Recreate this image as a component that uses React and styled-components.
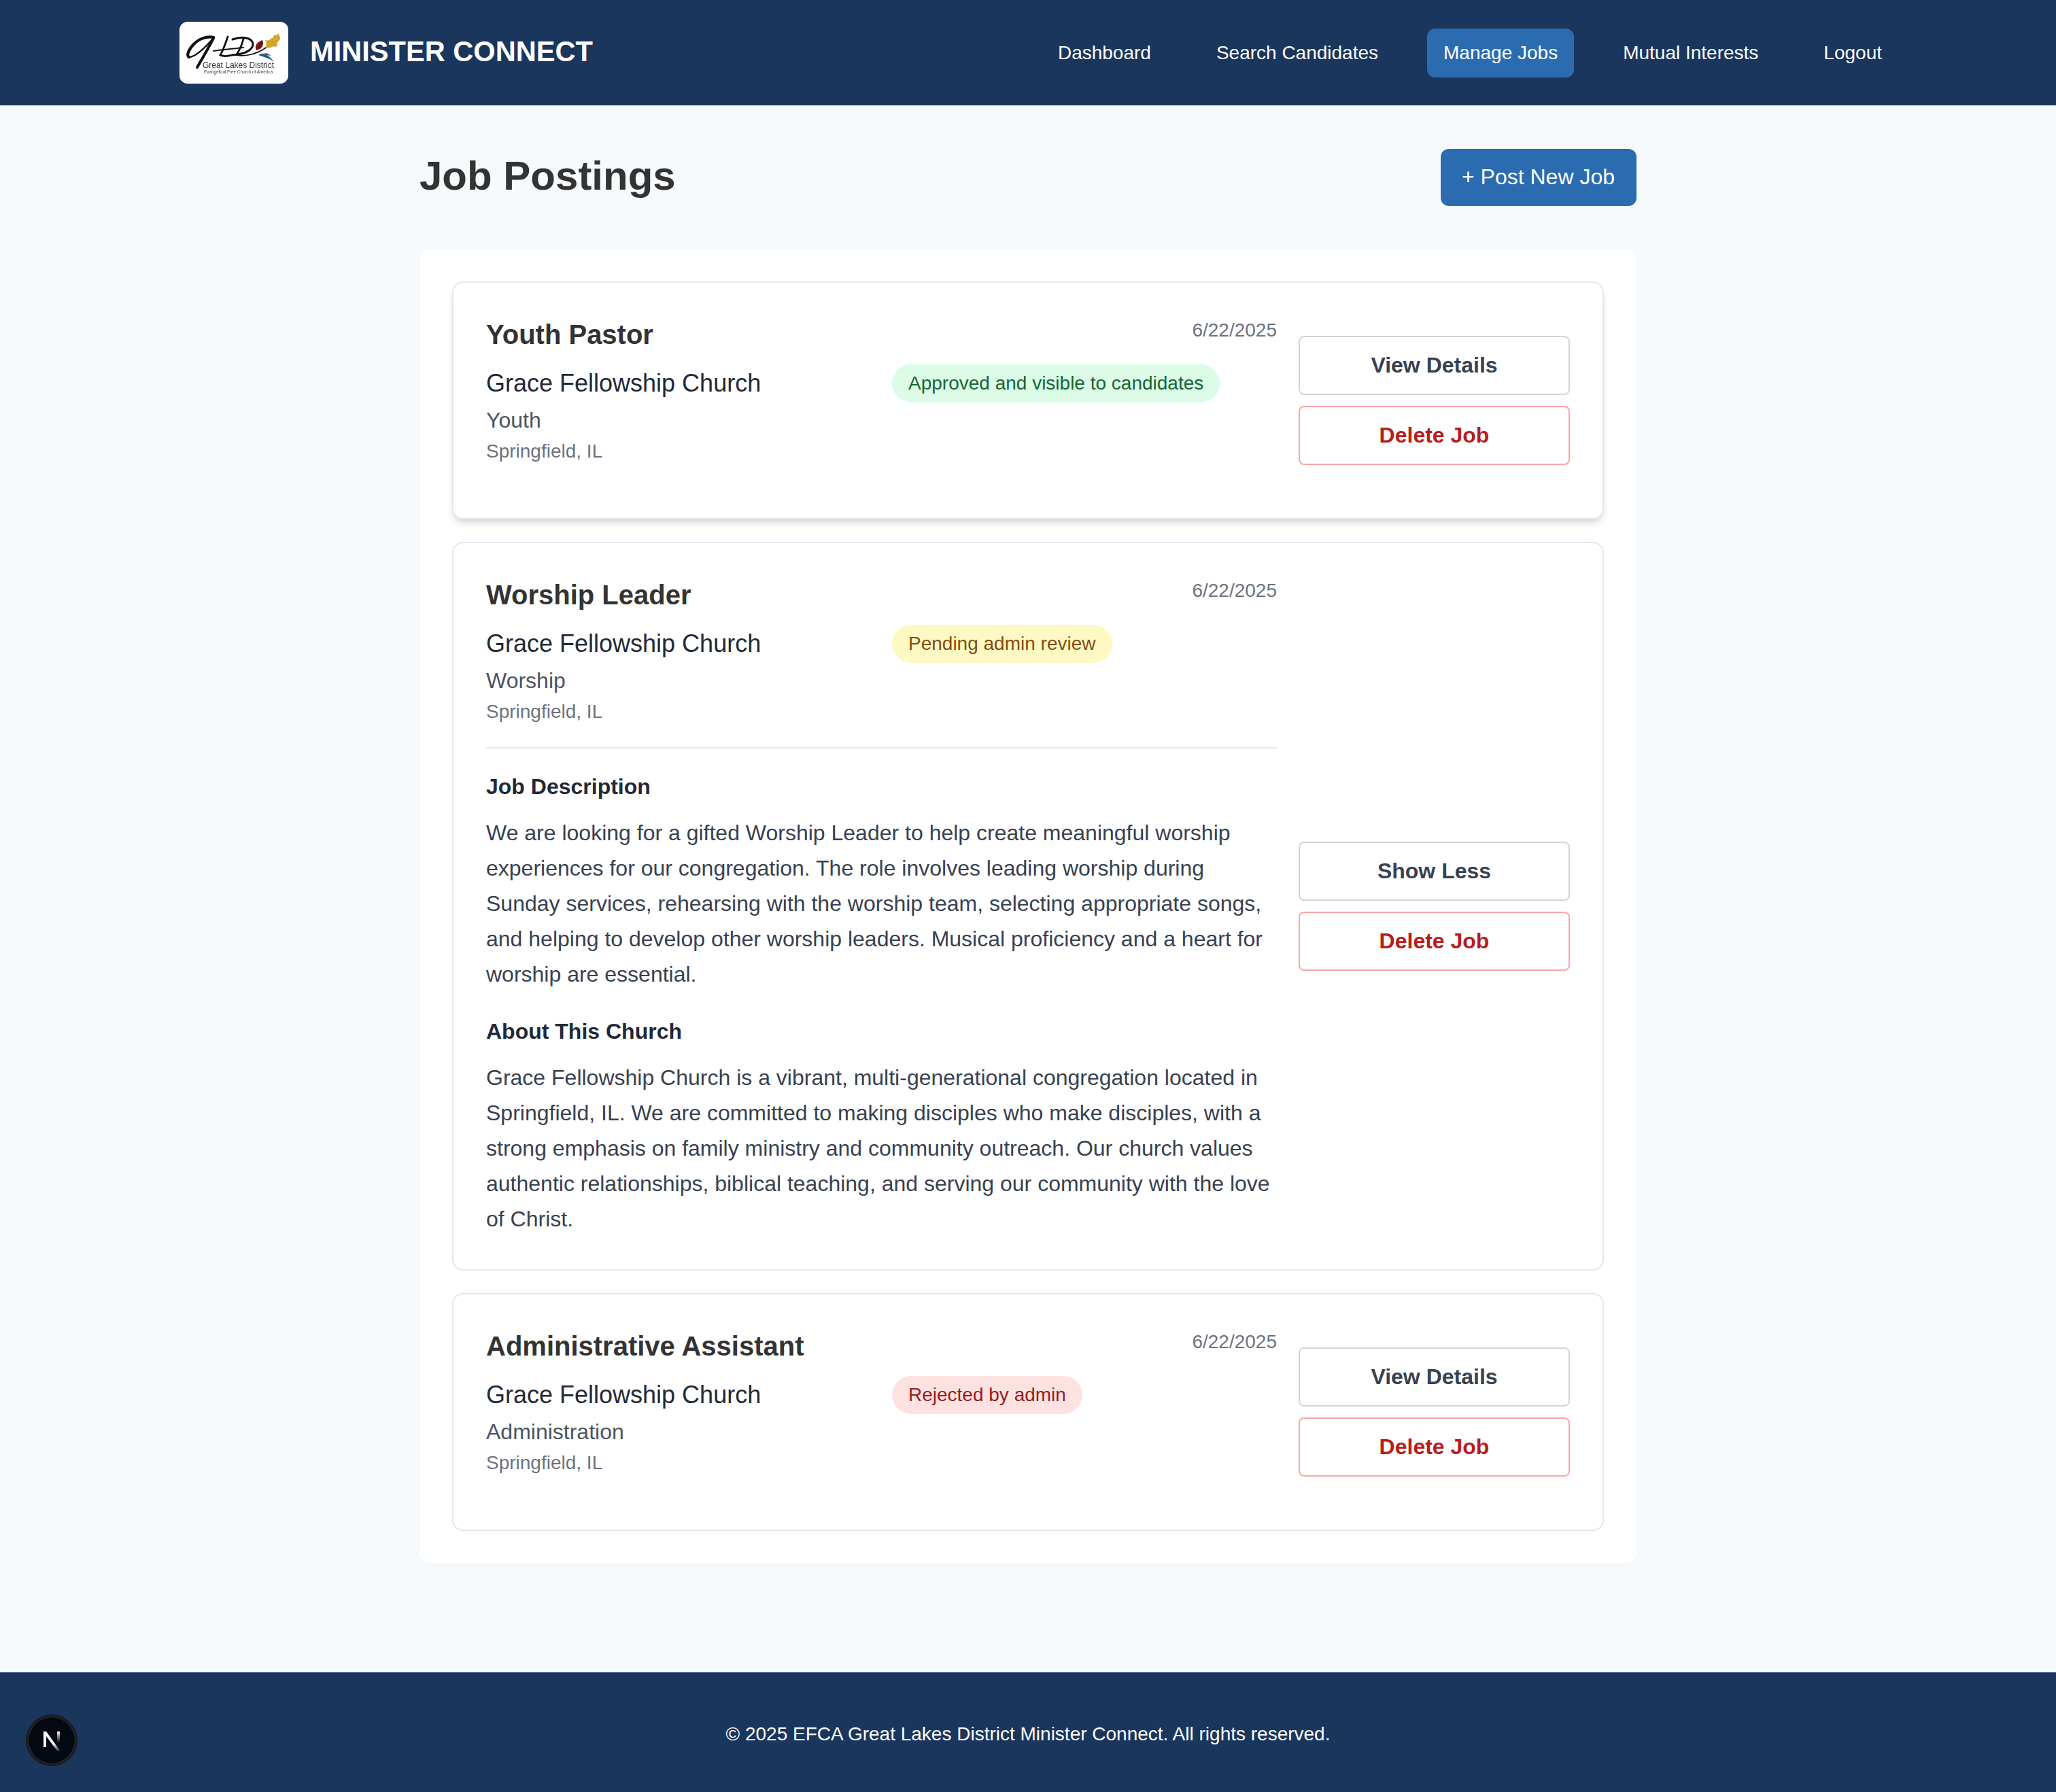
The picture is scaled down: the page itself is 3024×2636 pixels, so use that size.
import React from "react";
import styled, { createGlobalStyle } from "styled-components";

const GlobalStyle = createGlobalStyle`
* { box-sizing: border-box; }
body {
    margin: 0;
    background-color: #f7fafc;
    font-family: "Liberation Sans", Arial, sans-serif;
    color: #333;
    line-height: 1.6;
}
`;

const Page = styled.div`
min-height: 2636px;
display: flex;
flex-direction: column;
`;

const Header = styled.header`
height: 155px;
background-color: #1a365d;
display: flex;
align-items: center;
justify-content: space-between;
padding: 0 232px 0 264px;
`;

const Brand = styled.div`
display: flex;
align-items: center;
gap: 32px;
`;

const LogoBox = styled.div`
width: 160px;
height: 91px;
background-color: #fff;
border-radius: 12px;
overflow: hidden;
`;

const LogoSvg = styled.svg`
display: block;
filter: blur(0.4px);
`;

const BrandName = styled.span`
color: #fff;
font-size: 41.6px;
font-weight: 700;
margin-top: -2px;
`;

const Nav = styled.nav`
display: flex;
gap: 48px;
`;

const NavLink = styled.a`
color: #fff;
font-size: 28px;
line-height: 44px;
padding: 14px 24px;
border-radius: 12px;
background-color: ${(p) => (p.$active ? "#2b6cb0" : "transparent")};
`;

const Main = styled.main`
flex: 1;
width: 1790px;
margin: 0 auto;
padding-top: 56px;
`;

const TitleRow = styled.div`
display: flex;
align-items: center;
justify-content: space-between;
margin-bottom: 59px;
`;

const PageTitle = styled.h1`
margin: 0;
font-size: 60px;
font-weight: 700;
color: #333;
`;

const PostButton = styled.button`
border: 0;
border-radius: 12px;
margin-top: 4px;
padding: 16px 32px 16px 31px;
background-color: #2b6cb0;
color: #fff;
font-family: inherit;
font-size: 32px;
line-height: 1.6;
`;

const Panel = styled.section`
background-color: #fff;
border-radius: 16px;
padding: 48px;
display: flex;
flex-direction: column;
gap: 33px;
box-shadow: 0 2px 6px rgba(0, 0, 0, 0.02);
`;

const Card = styled.article`
display: flex;
align-items: center;
gap: 32px;
border: 2px solid #e2e8f0;
border-radius: 16px;
padding: 48px;
box-shadow: ${(p) => (p.$raised ? "0 8px 12px -2px rgba(0, 0, 0, 0.12), 0 4px 6px -2px rgba(0, 0, 0, 0.06)" : "none")};
`;

const CardBody = styled.div`
flex: 1;
min-width: 0;
`;

const CardTop = styled.div`
display: flex;
justify-content: space-between;
align-items: flex-start;
margin-bottom: 16px;
`;

const JobTitle = styled.h2`
margin: 0;
font-size: 40px;
font-weight: 700;
line-height: 56px;
color: #333;
`;

const PostedDate = styled.span`
font-size: 28px;
line-height: 44px;
color: #6b7280;
`;

const InfoGrid = styled.div`
display: grid;
grid-template-columns: 1fr 1fr;
gap: 31px;
align-items: start;
margin-bottom: 30px;
`;

const ChurchName = styled.div`
font-size: 36px;
line-height: 56px;
color: #1f2937;
`;

const Category = styled.div`
font-size: 32px;
line-height: 52px;
color: #4b5563;
`;

const Location = styled.div`
font-size: 28px;
line-height: 40px;
color: #6b7280;
`;

const Badge = styled.span`
display: inline-block;
padding: 8px 24px;
border-radius: 9999px;
font-size: 28px;
line-height: 40px;
color: ${(p) => p.$text};
background-color: ${(p) => p.$bg};
`;

const Details = styled.div`
border-top: 2px solid #e2e8f0;
margin-top: 32px;
padding-top: 30px;
`;

const DetailHeading = styled.h4`
margin: 0 0 16px;
font-size: 32px;
font-weight: 700;
line-height: 52px;
color: #1f2937;
`;

const DetailText = styled.p`
margin: 0 0 32px;
font-size: 32px;
line-height: 52px;
color: #374151;

&:last-child {
    margin-bottom: 0;
}
`;

const Actions = styled.div`
width: 399px;
flex-shrink: 0;
display: flex;
flex-direction: column;
gap: 16px;
`;

const ActionButton = styled.button`
height: 87px;
background-color: #fff;
border: 2px solid ${(p) => (p.$danger ? "#fca5a5" : "#d1d5db")};
border-radius: 8px;
color: ${(p) => (p.$danger ? "#b91c1c" : "#374151")};
font-family: inherit;
font-size: 32px;
font-weight: 700;
`;

const Footer = styled.footer`
height: 176px;
padding-top: 6px;
background-color: #1a365d;
display: flex;
align-items: center;
justify-content: center;
color: #fff;
font-size: 28px;
`;

const DevBadge = styled.div`
position: fixed;
left: 38px;
top: 2522px;
width: 76px;
height: 76px;
border-radius: 50%;
background-color: #050a12;
border: 3px solid #1c1c1e;
box-shadow: inset 0 0 0 1px #3a3a3c;
display: flex;
align-items: center;
justify-content: center;
`;

const LogoMark = () => (
    <LogoSvg width="160" height="91" viewBox="0 0 160 91">
        <g fill="none" stroke="#111" strokeLinecap="round">
            {/* G */}
            <path d="M50 23 C40 21 28 25 20 34 C13 42 10 50 14 52" strokeWidth="4.2" />
            <path d="M14 52 C22 52 36 40 50 24" strokeWidth="2.6" />
            <path d="M50 24 C44 36 36 50 26 67" strokeWidth="4" />
            {/* L */}
            <path d="M71 22 C67 34 63 44 60 49 C66 52 74 50 84 48" strokeWidth="2.8" />
            <path d="M50 43 C62 41 76 40 94 38" strokeWidth="1.8" />
            {/* D */}
            <path d="M78 26 C92 21 106 23 108 32 C109 40 98 47 84 48" strokeWidth="3" />
            <path d="M94 25 C92 34 88 42 84 48" strokeWidth="2.8" />
            {/* swoosh under the D, running into the leaves */}
            <path d="M78 48 C92 52 112 50 130 36" strokeWidth="1.6" />
        </g>
        <path d="M113 42 C110 36 113 30 122 27 C125 33 122 40 113 42 Z" fill="#7a1414" />
        <path d="M127 38 C126 34 130 33 126 27 C130 28 134 27 135 24 C137 25 138 23 139 19 C141 21 143 20 146 17 C146 21 149 22 148 26 C145 27 146 30 143 31 C145 34 143 37 141 37 C138 34 134 40 127 38 Z" fill="#d4a72c" />
        <path d="M116 49 C124 43 132 50 139 59 C131 53 124 52 116 49 Z" fill="#2f5d86" />
        <path d="M124 47 C128 45 132 48 135 50 C131 49 128 49 124 47 Z" fill="#2f5d86" />
        <text x="34" y="68" fontFamily="Liberation Sans, Arial, sans-serif" fontSize="12" fill="#333" textLength="105">Great Lakes District</text>
        <text x="36" y="75.5" fontFamily="Liberation Sans, Arial, sans-serif" fontSize="6.5" fill="#444" textLength="101">Evangelical Free Church of America</text>
    </LogoSvg>
);

const NextMark = () => (
    <svg width="36" height="36" viewBox="0 0 36 36">
        <defs>
            <linearGradient id="next-fade-a" x1="0" y1="0" x2="1" y2="1">
                <stop offset="0.6" stopColor="#fff" />
                <stop offset="1" stopColor="#fff" stopOpacity="0" />
            </linearGradient>
            <linearGradient id="next-fade-b" x1="0" y1="0" x2="0" y2="1">
                <stop offset="0" stopColor="#fff" />
                <stop offset="0.85" stopColor="#fff" stopOpacity="0" />
            </linearGradient>
        </defs>
        <path d="M6 5 h4 L31 34 h-4.4 L10 12 V28 H6 Z" fill="url(#next-fade-a)" />
        <rect x="26" y="5" width="4" height="19" fill="url(#next-fade-b)" />
    </svg>
);

const jobs = [
    {
        title: "Youth Pastor",
        category: "Youth",
        status: "Approved and visible to candidates",
        text: "#166534",
        bg: "#dcfce7",
        raised: true,
    },
    {
        title: "Worship Leader",
        category: "Worship",
        status: "Pending admin review",
        text: "#854d0e",
        bg: "#fef9c3",
        expanded: true,
    },
    {
        title: "Administrative Assistant",
        category: "Administration",
        status: "Rejected by admin",
        text: "#991b1b",
        bg: "#fee2e2",
    },
];

const links = ["Dashboard", "Search Candidates", "Manage Jobs", "Mutual Interests", "Logout"];

export default function App() {
    return (
        <Page>
            <GlobalStyle />
            <Header>
                <Brand>
                    <LogoBox>
                        <LogoMark />
                    </LogoBox>
                    <BrandName>MINISTER CONNECT</BrandName>
                </Brand>
                <Nav>
                    {links.map((link) => (
                        <NavLink key={link} $active={link === "Manage Jobs"}>{link}</NavLink>
                    ))}
                </Nav>
            </Header>
            <Main>
                <TitleRow>
                    <PageTitle>Job Postings</PageTitle>
                    <PostButton>+ Post New Job</PostButton>
                </TitleRow>
                <Panel>
                    {jobs.map((job) => (
                        <Card key={job.title} $raised={job.raised}>
                            <CardBody>
                                <CardTop>
                                    <JobTitle>{job.title}</JobTitle>
                                    <PostedDate>6/22/2025</PostedDate>
                                </CardTop>
                                <InfoGrid>
                                    <div>
                                        <ChurchName>Grace Fellowship Church</ChurchName>
                                        <Category>{job.category}</Category>
                                        <Location>Springfield, IL</Location>
                                    </div>
                                    <div>
                                        <Badge $text={job.text} $bg={job.bg}>{job.status}</Badge>
                                    </div>
                                </InfoGrid>
                                {job.expanded && (
                                    <Details>
                                        <DetailHeading>Job Description</DetailHeading>
                                        <DetailText>
                                            We are looking for a gifted Worship Leader to help create meaningful worship experiences for our congregation. The role involves leading worship during Sunday services, rehearsing with the worship team, selecting appropriate songs, and helping to develop other worship leaders. Musical proficiency and a heart for worship are essential.
                                        </DetailText>
                                        <DetailHeading>About This Church</DetailHeading>
                                        <DetailText>
                                            Grace Fellowship Church is a vibrant, multi-generational congregation located in Springfield, IL. We are committed to making disciples who make disciples, with a strong emphasis on family ministry and community outreach. Our church values authentic relationships, biblical teaching, and serving our community with the love of Christ.
                                        </DetailText>
                                    </Details>
                                )}
                            </CardBody>
                            <Actions>
                                <ActionButton>{job.expanded ? "Show Less" : "View Details"}</ActionButton>
                                <ActionButton $danger>Delete Job</ActionButton>
                            </Actions>
                        </Card>
                    ))}
                </Panel>
            </Main>
            <Footer>© 2025 EFCA Great Lakes District Minister Connect. All rights reserved.</Footer>
            <DevBadge>
                <NextMark />
            </DevBadge>
        </Page>
    );
}
